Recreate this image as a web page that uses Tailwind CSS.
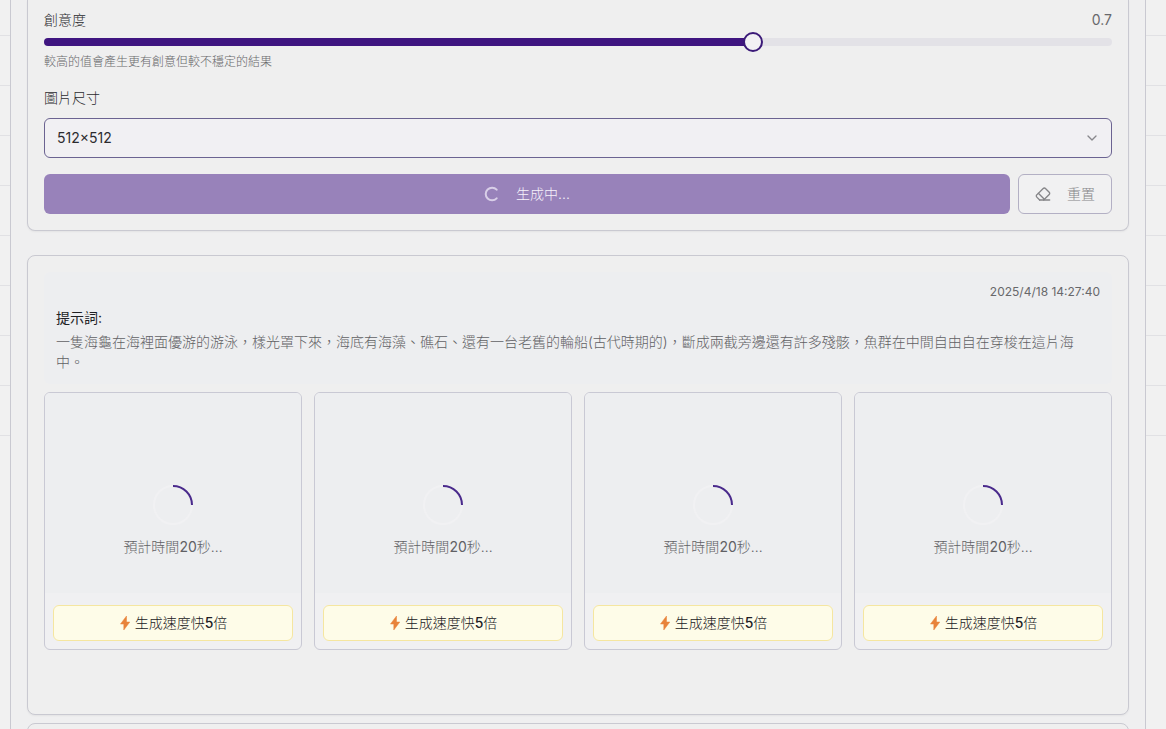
<!DOCTYPE html>
<html lang="zh-Hant">
<head>
    <meta charset="UTF-8">
    <meta name="viewport" content="width=device-width, initial-scale=1.0">
    <script src="https://cdn.jsdelivr.net/npm/@tailwindcss/browser@4"></script>
    <title>圖片生成</title>
</head>
<body class="bg-[#f1f1f1] font-[Inter,'Noto_Sans_CJK_TC',sans-serif] text-sm text-[#2b2b2e]">
    <div class="flex h-screen overflow-hidden">
      <div class="gutter w-[10px] shrink-0"></div>
      <main class="flex-1 min-w-0 border-x border-[#c9c9d1] bg-[#efeff0] px-4">
        <section class="border-x border-b border-[#c9c9d1] rounded-b-lg bg-[#efefef] shadow-xs px-4 pt-[10px] pb-4">
          <div class="flex justify-between">
            <label for="creativity" class="font-light">創意度</label>
            <output for="creativity" class="text-[#68686b]">0.7</output>
          </div>
          <input id="creativity" type="range" min="0.1" max="1" step="0.1" value="0.7" class="block w-full h-2 mt-2 rounded-full appearance-none bg-[linear-gradient(to_right,#3f1580_66%,#e3e2e7_66%)] [&::-webkit-slider-thumb]:appearance-none [&::-webkit-slider-thumb]:size-5 [&::-webkit-slider-thumb]:rounded-full [&::-webkit-slider-thumb]:border-2 [&::-webkit-slider-thumb]:border-[#3b1a78] [&::-webkit-slider-thumb]:bg-[#f2f1f4]">
          <p class="mt-2 text-xs font-light text-[#68686b]">較高的值會產生更有創意但較不穩定的結果</p>
          <label for="size" class="block mt-[18px] font-light">圖片尺寸</label>
          <div class="relative mt-[10px]">
            <select id="size" class="block w-full h-10 px-3 rounded-md border border-[#6b6391] bg-[#f1f0f3] appearance-none">
              <option>512×512</option>
              <option>768×768</option>
              <option>1024×1024</option>
            </select>
            <svg class="absolute right-3 top-3 size-4 text-[#88888c] pointer-events-none" viewBox="0 0 24 24" fill="none" stroke="currentColor" stroke-width="2" stroke-linecap="round" stroke-linejoin="round"><path d="m6 9 6 6 6-6"/></svg>
          </div>
          <div class="flex gap-2 mt-4">
            <button disabled class="flex-1 h-10 flex items-center justify-center rounded-md bg-[#9882ba] font-light text-[#f6f2fa]">
              <svg class="size-4 mr-4" viewBox="0 0 24 24" fill="none" stroke="#d9cfe8" stroke-width="3" stroke-linecap="round" stroke-linejoin="round"><path d="M19 18.500A9.500 9.500 0 1 1 19 5.500"/></svg>
              生成中...
            </button>
            <button disabled class="h-10 px-4 flex items-center rounded-md border border-[#b3b0c4] bg-[#f1f1f2] font-light text-[#858588]">
              <svg class="size-4 mr-4" viewBox="0 0 24 24" fill="none" stroke="currentColor" stroke-width="2" stroke-linecap="round" stroke-linejoin="round"><path d="m7 21-4.300-4.300c-1-1-1-2.500 0-3.400l9.600-9.600c1-1 2.500-1 3.400 0l5.600 5.600c1 1 1 2.500 0 3.400L13 21"/><path d="M22 21H7"/><path d="m5 11 9 9"/></svg>
              重置
            </button>
          </div>
        </section>

        <section class="mt-6 border border-[#c9c9d1] rounded-lg bg-[#efefef] shadow-xs px-4 pt-4 pb-16">
          <div class="p-3 rounded-md bg-[#edeef0]">
            <p class="text-xs text-right text-[#68686b]">2025/4/18 14:27:40</p>
            <h3 class="mt-2 text-[#202023]">提示詞:</h3>
            <p class="mt-1 font-light text-[#616164]">一隻海龜在海裡面優游的游泳，樣光罩下來，海底有海藻、礁石、還有一台老舊的輪船(古代時期的)，斷成兩截旁邊還有許多殘骸，魚群在中間自由自在穿梭在這片海中。</p>
          </div>
          <div class="results grid grid-cols-4 gap-3 mt-2"></div>
        </section>

        <section class="mt-2 h-20 border border-[#c9c9d1] rounded-lg bg-[#efefef]"></section>
      </main>
      <div class="gutter w-5 shrink-0"></div>
    </div>
    <script>
      const results = document.querySelector('.results')
      for (let i = 0; i < 4; i++) {
        results.innerHTML += `
        <div class="rounded-md border border-[#c9c9d4] bg-[#f0f0f2] overflow-hidden">
          <div class="h-[200px] pt-[92px] flex flex-col items-center bg-[#edeef0]">
            <svg class="size-10 shrink-0" viewBox="0 0 40 40" fill="none" stroke-width="2"><circle cx="20" cy="20" r="19" stroke="#f1f1f3"/><path d="M20 1A19 19 0 0 1 39 20" stroke="#4a2a8c"/></svg>
            <p class="mt-3 font-light text-[#616164]">預計時間<span class="font-normal">20</span>秒...</p>
          </div>
          <div class="px-2 pt-3 pb-2">
            <button class="w-full h-9 flex items-center justify-center gap-1 rounded-md border border-[#f5e6a0] bg-[#fefce8] text-[#202023]">
              <svg class="w-3 h-4" viewBox="0 0 12 16" fill="#e8833a"><path d="M7.500 1 1.500 9H4.800L4.800 15 10.800 7H7.500Z" stroke="#e8833a" stroke-width="0.500" stroke-linejoin="round"/></svg>
              <span class="font-light">生成速度快<b class="font-medium">5</b>倍</span>
            </button>
          </div>
        </div>`
      }

      document.querySelectorAll('.gutter').forEach((gutter) => {
        gutter.innerHTML = '<div class="h-9 border-b border-[#e1e1e4]"></div>' + '<div class="h-[50px] border-b border-[#e1e1e4]"></div>'.repeat(8)
      })
    </script>
</body>
</html>
